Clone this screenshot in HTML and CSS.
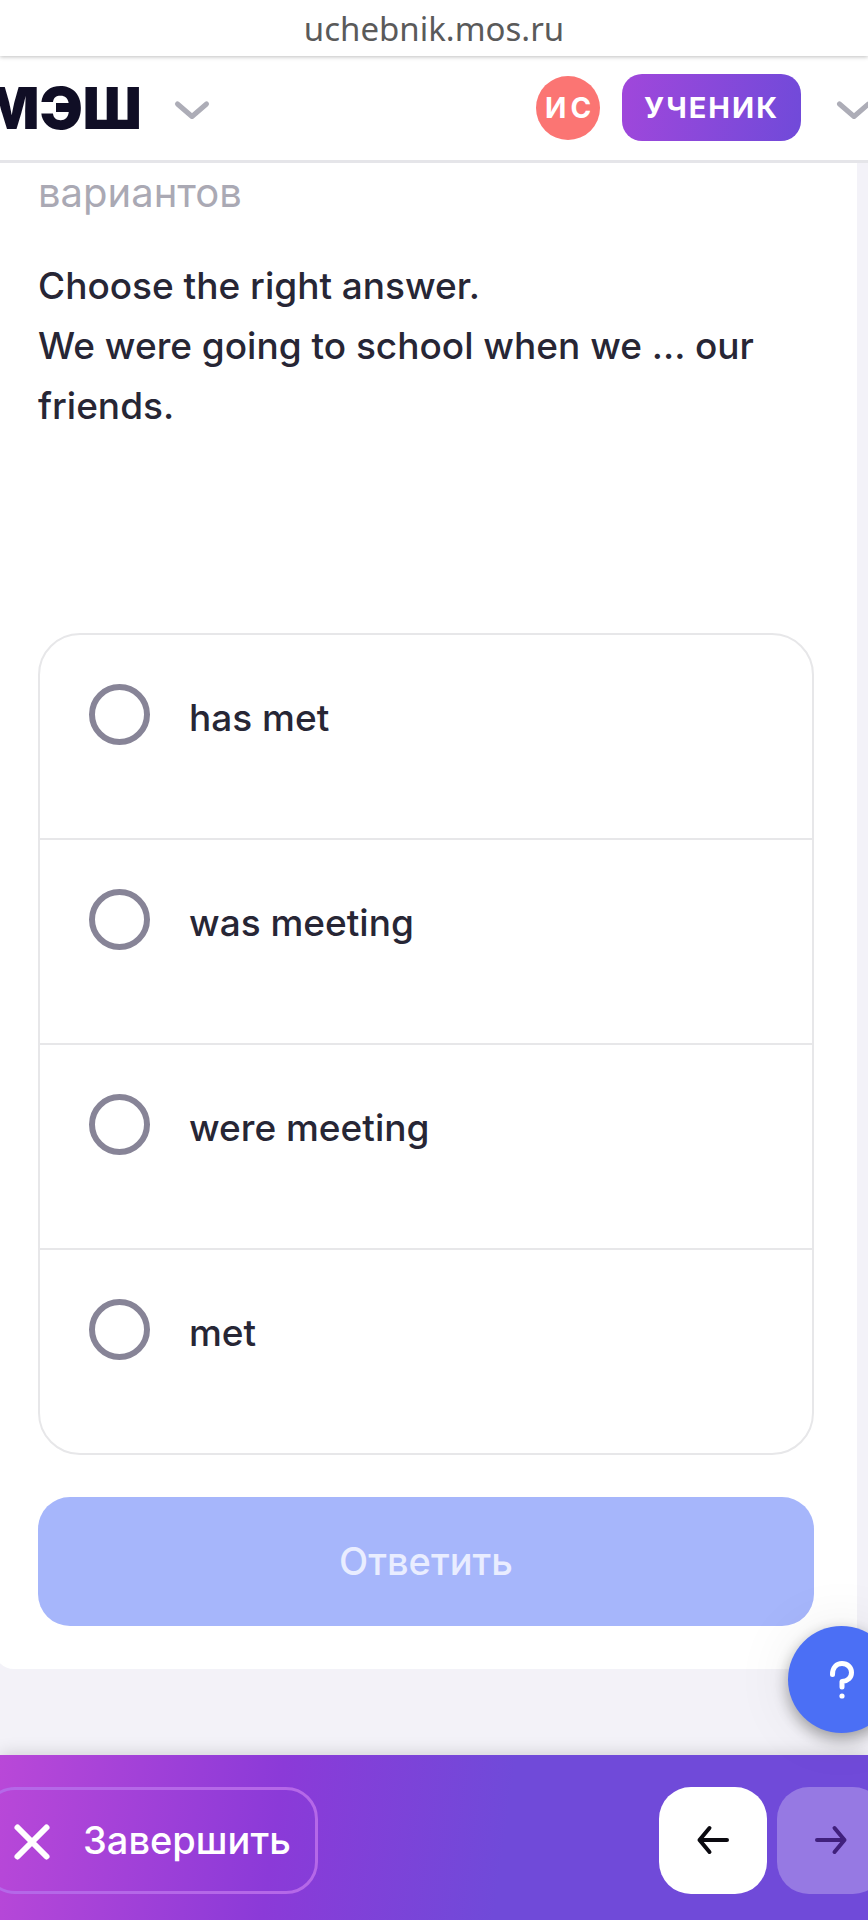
FILE: index.html
```html
<!DOCTYPE html>
<html lang="ru">
<head>
  <meta charset="UTF-8" />
  <title>МЭШ</title>
  <meta name="viewport" content="width=device-width, initial-scale=1.0"/>
  <link rel="stylesheet" href="styles.css">
</head>
<body>
  <!-- Адресная строка -->
  <div class="url-bar">uchebnik.mos.ru</div>

  <!-- Шапка -->
  <header class="header">
    <a class="logo" href="#">МЭШ</a>
    <button class="chevron-button" type="button" aria-label="Разделы">
      <svg class="chevron" viewBox="0 0 34 24">
        <path d="M2.5 8 L17 20.5 L31.5 8" />
      </svg>
    </button>
    <div class="profile">
      <div class="avatar">ИС</div>
      <div class="role">УЧЕНИК</div>
      <button class="chevron-button" type="button" aria-label="Профиль">
        <svg class="chevron" viewBox="0 0 34 24">
          <path d="M2.5 8 L17 20.5 L31.5 8" />
        </svg>
      </button>
    </div>
  </header>

  <!-- Задание -->
  <main class="content">
    <form class="card">
      <div class="hint">вариантов</div>
      <p class="question">Choose the right answer.<br>We were going to school when we ... our friends.</p>

      <div class="answers">
        <label class="answer">
          <input type="radio" name="answer" value="1">
          <span>has met</span>
        </label>
        <label class="answer">
          <input type="radio" name="answer" value="2">
          <span>was meeting</span>
        </label>
        <label class="answer">
          <input type="radio" name="answer" value="3">
          <span>were meeting</span>
        </label>
        <label class="answer">
          <input type="radio" name="answer" value="4">
          <span>met</span>
        </label>
      </div>

      <button class="submit-button" type="submit" disabled>Ответить</button>
    </form>
  </main>

  <!-- Нижняя панель -->
  <footer class="footer">
    <button class="finish-button" type="button">
      <svg class="cross" viewBox="0 0 36 36">
        <path d="M3.5 5.5 L32.5 34.5 M32.5 5.5 L3.5 34.5" />
      </svg>
      <span>Завершить</span>
    </button>
    <div class="nav">
      <button class="nav-button" type="button" aria-label="Назад">
        <svg class="arrow" viewBox="0 0 32 30">
          <path d="M30 15 H2.5 M12.5 3 L2.5 15 L12.5 27" />
        </svg>
      </button>
      <button class="nav-button" type="button" aria-label="Вперёд" disabled>
        <svg class="arrow" viewBox="0 0 32 30">
          <path d="M2 15 H29.5 M19.5 3 L29.5 15 L19.5 27" />
        </svg>
      </button>
    </div>
  </footer>

  <!-- Кнопка помощи поверх страницы -->
  <button class="help-button" type="button" aria-label="Помощь">
    <svg class="question-mark" viewBox="0 0 24 38">
      <path d="M2.5 13.5 C2.5 6.5 6.5 2.5 12 2.5 C17.5 2.5 21.5 6.5 21.5 11.5 C21.5 16.5 18 20 12 20.5 V26" />
      <circle cx="12" cy="35" r="2.6" />
    </svg>
  </button>
</body>
</html>
```
FILE: styles.css
```css
/* ================================
   Общие стили
   ================================ */
* {
  box-sizing: border-box;
}
body {
  font-family: Inter, "Noto Sans", sans-serif;
  font-size: 37px;
  font-weight: 500;
  color: #272635;
  background: #f3f2f8;
  margin: 0;
  min-height: 100vh;
  display: flex;
  flex-direction: column;
  position: relative;
  overflow-x: hidden;
}
button {
  font: inherit;
  border: none;
  padding: 0;
  cursor: pointer;
}
svg {
  display: block;
  overflow: visible;
  fill: none;
  stroke: currentColor;
  stroke-linecap: round;
  stroke-linejoin: round;
}

/* ================================
   Адресная строка
   ================================ */
.url-bar {
  height: 56px;
  line-height: 58px;
  background: #fff;
  color: #5a5a5a;
  font-family: "Noto Sans", sans-serif;
  font-size: 33px;
  font-weight: 400;
  text-align: center;
  box-shadow: 0 1px 4px rgba(0, 0, 0, 0.25);
  z-index: 2;
}

/* ================================
   Шапка
   ================================ */
.header {
  display: flex;
  align-items: center;
  height: 107px;
  padding-bottom: 1px;
  background: #fff;
  border-bottom: 3px solid #e5e5e9;
}
.logo {
  margin-left: -16px;
  color: #100e25;
  font-size: 58px;
  font-weight: 900;
  line-height: 64px;
  text-decoration: none;
}
.chevron-button {
  background: none;
  color: #adadb7;
  margin-left: 33px;
}
.chevron {
  width: 34px;
  height: 24px;
  stroke-width: 5;
}
.profile {
  display: flex;
  align-items: center;
  margin-left: auto;
  margin-right: -3px;
}
.profile .chevron-button {
  margin-left: 36px;
}
.avatar {
  width: 64px;
  height: 64px;
  line-height: 64px;
  padding-left: 4px;
  border-radius: 50%;
  background: #fb7573;
  color: #fff;
  font-size: 28px;
  font-weight: 700;
  letter-spacing: 4px;
  text-align: center;
}
.role {
  margin-left: 22px;
  padding: 0 22px;
  line-height: 67px;
  border-radius: 20px;
  background: linear-gradient(100deg, #a047db, #704ad9);
  color: #fff;
  font-size: 29px;
  font-weight: 700;
  letter-spacing: 2px;
}

/* ================================
   Карточка задания
   ================================ */
.content {
  flex: 1;
  padding-bottom: 86px;
}
.card {
  margin: 0 11px 0 -6px;
  padding: 0 43px 43px 44px;
  background: #fff;
  border-radius: 0 0 20px 20px;
}
.hint {
  color: #aaa9b4;
  font-size: 40px;
  font-weight: 400;
  line-height: 60px;
}
.question {
  margin: 33px 0 197px 0;
  line-height: 60px;
}

/* Варианты ответа */
.answers {
  border: 2px solid #e7e7e9;
  border-radius: 42px;
}
.answer {
  display: flex;
  align-items: flex-start;
  gap: 39px;
  padding: 49px 49px 86px 49px;
  line-height: 68px;
  cursor: pointer;
}
.answer + .answer {
  border-top: 2px solid #e7e7e9;
}
.answer input {
  appearance: none;
  flex: none;
  width: 61px;
  height: 61px;
  margin: 0;
  border: 6px solid #878497;
  border-radius: 50%;
}
.answer input:checked {
  background: #4c6ef5;
}

.submit-button {
  display: block;
  width: 100%;
  margin-top: 42px;
  font-size: 38px;
  line-height: 129px;
  border-radius: 32px;
  background: #a6b6fb;
  color: #e9edff;
}

/* ================================
   Нижняя панель
   ================================ */
.footer {
  display: flex;
  align-items: center;
  justify-content: space-between;
  height: 165px;
  padding-top: 5px;
  background: linear-gradient(98deg, #b948d8 0%, #8b3ad8 32%, #704ad9 58%);
  color: #fff;
  box-shadow: 0 -2px 16px rgba(0, 0, 0, 0.14);
  z-index: 1;
}
.finish-button {
  display: flex;
  align-items: center;
  gap: 33px;
  height: 107px;
  margin-left: -17px;
  padding: 0 24px 0 28px;
  border: 3px solid #b568e8;
  border-radius: 32px;
  background: none;
  color: #fff;
  font-size: 38px;
}
.cross {
  width: 36px;
  height: 36px;
  stroke-width: 6;
}
.nav {
  display: flex;
  gap: 10px;
  margin-right: -17px;
}
.nav-button {
  display: flex;
  align-items: center;
  justify-content: center;
  width: 108px;
  height: 107px;
  border-radius: 32px;
  background: #fff;
  color: #0b0a10;
}
.nav-button:disabled {
  background: #9679e3;
  color: #40207c;
}
.arrow {
  width: 32px;
  height: 30px;
  stroke-width: 4;
}

/* ================================
   Кнопка помощи
   ================================ */
.help-button {
  position: fixed;
  right: -27px;
  bottom: 187px;
  display: flex;
  align-items: center;
  justify-content: center;
  width: 107px;
  height: 107px;
  border-radius: 50%;
  background: #4b6ff5;
  color: #fff;
  box-shadow: 0 6px 16px rgba(0, 0, 0, 0.35), 0 0 60px rgba(0, 0, 0, 0.08);
  z-index: 1;
}
.question-mark {
  width: 24px;
  height: 38px;
  stroke-width: 5;
}
.question-mark circle {
  fill: currentColor;
  stroke: none;
}
```
